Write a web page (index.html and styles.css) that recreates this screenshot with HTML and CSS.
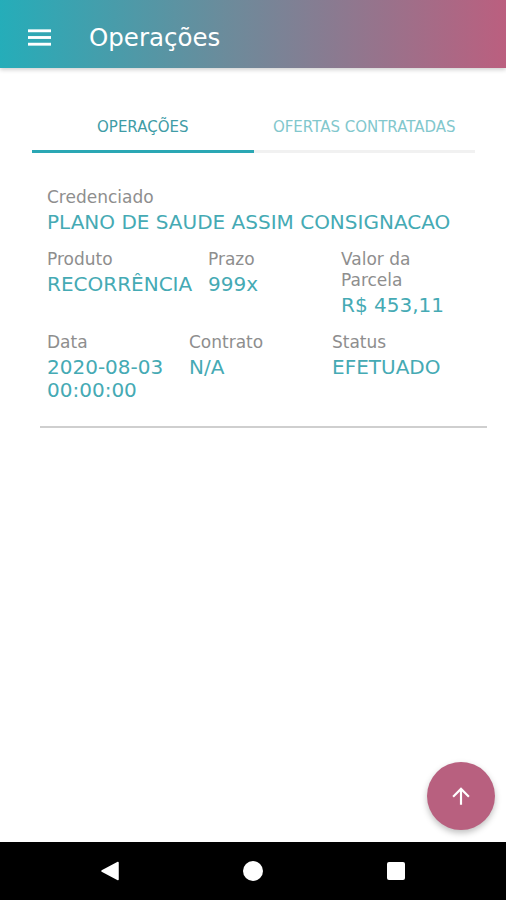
FILE: index.html
```html
<!DOCTYPE html>
<html lang="pt-BR">
<head>
  <meta charset="UTF-8">
  <title>Operações</title>
  <link rel="stylesheet" href="styles.css">
</head>
<body>
  <div class="screen">
    <header class="app-bar">
      <svg class="menu-icon" width="24" height="17" viewBox="0 0 24 17">
        <rect x="0" y="0" width="24" height="3" fill="#fff"/>
        <rect x="0" y="7" width="24" height="3" fill="#fff"/>
        <rect x="0" y="14" width="24" height="3" fill="#fff"/>
      </svg>
      <h1 class="title">Operações</h1>
    </header>

    <main class="content">
      <nav class="tabs">
        <div class="tab active">OPERAÇÕES</div>
        <div class="tab">OFERTAS CONTRATADAS</div>
      </nav>

      <section class="card">
        <div class="field">
          <div class="label">Credenciado</div>
          <div class="value">PLANO DE SAUDE ASSIM CONSIGNACAO</div>
        </div>

        <div class="row row-product">
          <div class="field">
            <div class="label">Produto</div>
            <div class="value">RECORRÊNCIA</div>
          </div>
          <div class="field">
            <div class="label">Prazo</div>
            <div class="value">999x</div>
          </div>
          <div class="field narrow">
            <div class="label">Valor da Parcela</div>
            <div class="value">R$ 453,11</div>
          </div>
        </div>

        <div class="row row-date">
          <div class="field">
            <div class="label">Data</div>
            <div class="value">2020-08-03<br>00:00:00</div>
          </div>
          <div class="field">
            <div class="label">Contrato</div>
            <div class="value">N/A</div>
          </div>
          <div class="field">
            <div class="label">Status</div>
            <div class="value">EFETUADO</div>
          </div>
        </div>
      </section>
    </main>

    <button class="fab">
      <svg width="26" height="26" viewBox="0 0 24 24">
        <path d="M4 12l1.41 1.41L11 7.83V20h2V7.83l5.58 5.59L20 12l-8-8-8 8z" fill="#fff"/>
      </svg>
    </button>

    <footer class="nav-bar">
      <svg width="20" height="20" viewBox="0 0 20 20"><path d="M18 1.5 L18 18.5 L2 10 Z" fill="#fff" stroke="#fff" stroke-width="1.5" stroke-linejoin="round"/></svg>
      <svg width="20" height="20" viewBox="0 0 20 20"><circle cx="10" cy="10" r="10" fill="#fff"/></svg>
      <svg width="20" height="20" viewBox="0 0 20 20"><rect x="1" y="1" width="18" height="18" rx="2" fill="#fff"/></svg>
    </footer>
  </div>
</body>
</html>
```

FILE: styles.css
```css
body {
  margin: 0;
  font-family: "DejaVu Sans", "Noto Sans", sans-serif;
  background: #fff;
}

.screen {
  position: relative;
  width: 506px;
  height: 900px;
  display: flex;
  flex-direction: column;
  overflow: hidden;
}

.app-bar {
  height: 68px;
  box-sizing: border-box;
  padding: 6px 0 0 28px;
  display: flex;
  align-items: center;
  background: linear-gradient(to right, #25adb9 0%, #6c8b9b 45%, #bb5f7f 100%);
  box-shadow: 0 2px 4px rgba(0,0,0,0.18);
  z-index: 1;
}

.menu-icon {
  width: 23px;
  height: 17px;
}

.title {
  margin: 0 0 0 38px;
  font-size: 24.5px;
  font-weight: normal;
  color: #fff;
}

.content {
  flex: 1;
  padding-top: 38px;
}

.tabs {
  display: flex;
  margin: 0 31px 0 32px;
}

.tab {
  flex: 1;
  height: 44px;
  line-height: 42px;
  text-align: center;
  font-size: 15px;
  color: #82c7cd;
  border-bottom: 3px solid #f1f1f1;
}

.tab.active {
  color: #3f9ca6;
  border-bottom-color: #2aa7b4;
}

.card {
  margin: 34px 19px 0 40px;
  padding: 0 0 24px 7px;
  border-bottom: 2px solid #cfcfcf;
}

.row {
  display: grid;
  margin-top: 15px;
}

.row-product {
  grid-template-columns: 161px 133px 120px;
}

.row-date {
  grid-template-columns: 142px 143px 1fr;
}

.label {
  font-size: 17px;
  line-height: 21px;
  color: #8e8e8e;
}

.value {
  margin-top: 3px;
  font-size: 20px;
  line-height: 23px;
  color: #45aab4;
  white-space: nowrap;
}

.fab {
  position: absolute;
  right: 11px;
  bottom: 70px;
  width: 68px;
  height: 68px;
  border: none;
  border-radius: 50%;
  background: #b8607f;
  box-shadow: 0 3px 6px rgba(0,0,0,0.25);
  display: flex;
  align-items: center;
  justify-content: center;
  padding: 0;
}

.nav-bar {
  height: 58px;
  background: #000;
  display: flex;
  align-items: center;
  justify-content: center;
  gap: 123px;
}
```
